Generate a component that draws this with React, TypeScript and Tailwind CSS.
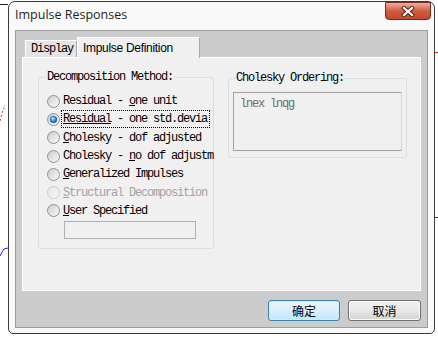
import React from 'react'

const mono = "font-['Liberation_Mono',monospace] text-[12px] tracking-[-1.2px] leading-[12px]"

function Radio({ id, checked, disabled }: { id: string; checked?: boolean; disabled?: boolean }) {
  return (
    <svg width="13" height="13" viewBox="0 0 13 13" className="shrink-0">
      <defs>
        <linearGradient id={`rf-${id}`} x1="0" y1="0" x2="1" y2="1">
          <stop offset="0" stopColor={disabled ? '#e6e6e6' : '#c9cbcd'} />
          <stop offset="1" stopColor={disabled ? '#f8f8f8' : '#fbfbfb'} />
        </linearGradient>
        <radialGradient id={`rd-${id}`} cx="0.4" cy="0.35" r="0.7">
          <stop offset="0" stopColor="#a8ecff" />
          <stop offset="0.5" stopColor="#3ba3dd" />
          <stop offset="1" stopColor="#0e4a86" />
        </radialGradient>
      </defs>
      <circle cx="6.5" cy="6.5" r="6" fill={`url(#rf-${id})`} stroke={disabled ? '#c9cbcc' : '#8f9496'} />
      {checked && <circle cx="6.5" cy="6.5" r="3.3" fill={`url(#rd-${id})`} stroke="#174d80" strokeWidth="0.6" />}
    </svg>
  )
}

const options = [
  { id: 'a', pre: 'Residual - ', u: 'o', post: 'ne unit' },
  { id: 'b', pre: '', u: 'Residual', post: ' - one std.devia', checked: true },
  { id: 'c', pre: '', u: 'C', post: 'holesky - dof adjusted' },
  { id: 'd', pre: 'Cholesky - ', u: 'n', post: 'o dof adjustm' },
  { id: 'e', pre: '', u: 'G', post: 'eneralized Impulses' },
  { id: 'f', pre: '', u: 'S', post: 'tructural Decomposition', disabled: true },
  { id: 'g', pre: '', u: 'U', post: 'ser Specified' },
]

export default function App() {
  return (
    <div className="relative w-[438px] h-[338px] overflow-hidden bg-white pt-[1px] pl-[8px]">
      {/* plot behind the dialog */}
      <svg className="absolute left-0 top-0" width="438" height="338">
        <path d="M0 4.5 H8" stroke="#222" strokeWidth="1" />
        <path d="M0 121 Q2 112 5 105" stroke="#e0201c" strokeWidth="1" strokeDasharray="2 2" fill="none" />
        <path d="M0 256 Q3 250 4 249 L8 248" stroke="#2020d0" strokeWidth="1" fill="none" />
        <path d="M434 52.5 H438" stroke="#e0201c" strokeWidth="1" />
        <path d="M434 217.5 H438" stroke="#2020d0" strokeWidth="1" />
      </svg>

      <div className="relative flex flex-col w-[427px] h-[333px] rounded-t-[7px] rounded-b-[5px] border border-[#3a3a3a] bg-[#f9f9f9] pl-[6px] pr-[6px] pb-[5px]">
        {/* TITLE BAR */}
        <div className="flex items-start justify-between h-[28px]">
          <span className="mt-[5px] font-['Open_Sans',sans-serif] text-[12.5px] leading-[16px] text-[#1e1e1e]">
            Impulse Responses
          </span>
          <div className="flex items-center justify-center w-[46px] h-[18px] -mr-[3px] rounded-b-[4px] border border-[#7c2a1c] bg-gradient-to-b from-[#eab1a2] via-[#cf5b3f] to-[#c4492d]">
            <svg width="14" height="11" viewBox="0 0 14 11">
              <path d="M3 2 L11 9 M11 2 L3 9" stroke="#4a2219" strokeWidth="4" strokeLinecap="square" />
              <path d="M3 2 L11 9 M11 2 L3 9" stroke="#ffffff" strokeWidth="2.2" strokeLinecap="square" />
            </svg>
          </div>
        </div>

        {/* CLIENT AREA */}
        <div className="flex flex-col h-[298px] border border-[#9c9c9c] bg-[#cccccc] px-[6px] pt-[6px]">
          {/* TABS */}
          <div className="flex items-end h-[20px] pl-[3px]">
            <div className={`flex items-center h-[17px] w-[52px] pl-[5px] border-t border-l border-white border-r border-r-[#a9a9a9] bg-[#e4e4e4] ${mono}`}>
              Display
            </div>
            <div className="relative z-10 flex items-center h-[21px] w-[123px] -mb-[1px] pl-[5px] border-t border-l border-white border-r border-r-[#a9a9a9] bg-[#f0f0f0] font-['Liberation_Sans',sans-serif] text-[12px] tracking-[-0.3px] text-black">
              Impulse Definition
            </div>
          </div>

          {/* PANEL */}
          <div className="flex items-start gap-[14px] h-[234px] border border-white bg-[#f0f0f0] pl-[15px] pt-[19px]">
            {/* DECOMPOSITION GROUP */}
            <div className="flex flex-col w-[176px] h-[172px] rounded-[3px] border border-[#d5dfe5]">
              <div className={`-mt-[7px] ml-[7px] w-fit px-[1px] bg-[#f0f0f0] text-black ${mono}`}>
                Decomposition Method:
              </div>
              <div className="flex flex-col mt-[9px]">
                {options.map((o) => (
                  <div key={o.id} className="flex items-center h-[18.3px] pl-[8px]">
                    <Radio id={o.id} checked={o.checked} disabled={o.disabled} />
                    <div
                      className={`ml-[1px] whitespace-nowrap pl-[1px] pr-[2px] py-[2px] border ${
                        o.checked ? 'border-dotted border-black' : 'border-transparent'
                      } ${o.disabled ? 'text-[#a3a3a3]' : 'text-black'} ${mono}`}
                    >
                      {o.pre}
                      <u className="underline-offset-[1px]">{o.u}</u>
                      {o.post}
                    </div>
                  </div>
                ))}
              </div>
              <div className="mt-[1px] ml-[25px] w-[132px] h-[18px] border border-[#b0b0b0] bg-[#f0f0f0]" />
            </div>

            {/* CHOLESKY GROUP */}
            <div className="flex flex-col mt-[1px] w-[179px] h-[80px] rounded-[3px] border border-[#d5dfe5]">
              <div className={`-mt-[7px] ml-[6px] w-fit px-[1px] bg-[#f0f0f0] text-black ${mono}`}>
                Cholesky Ordering:
              </div>
              <div className={`mt-[8px] ml-[4px] w-[169px] h-[59px] border border-[#a0a0a0] border-r-[#d4d4d4] bg-[#f0f0f0] pl-[6px] pt-[5px] text-[#6d6d6d] ${mono}`}>
                lnex lnqg
              </div>
            </div>
          </div>

          {/* BUTTONS */}
          <div className="flex justify-end gap-[8px] mt-[9px] font-['Noto_Sans_CJK_SC',sans-serif] text-[12px]">
            <button className="w-[72px] h-[21px] rounded-[3px] border border-[#3c7fb1] bg-gradient-to-b from-[#eaf6fd] via-[#d9f0fc] to-[#bee6fd] text-black leading-none shadow-[inset_0_0_0_1px_#cdeefc]">
              确定
            </button>
            <button className="w-[73px] h-[21px] rounded-[3px] border border-[#707070] bg-gradient-to-b from-[#f2f2f2] via-[#e8e8e8] to-[#d2d2d2] text-black leading-none shadow-[inset_0_0_0_1px_#fbfbfb]">
              取消
            </button>
          </div>
        </div>
      </div>
    </div>
  )
}
